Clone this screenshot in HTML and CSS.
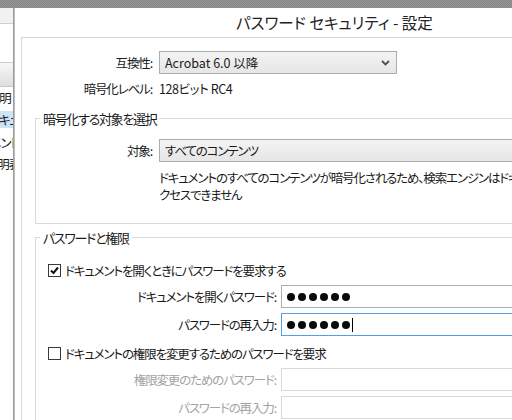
FILE: index.html
```html
<!DOCTYPE html>
<html lang="ja">
<head>
<meta charset="utf-8">
<link rel="stylesheet" href="styles.css">
</head>
<body>
<div class="desk">
  <div class="strip"></div>
  <div class="main">
    <div class="bgwin">
      <div class="bg-top"></div>
      <div class="bg-blank"></div>
      <div class="bg-head"></div>
      <div class="bg-list">
        <div class="bg-row r1">説明</div>
        <div class="bg-row r2">セキュリティ</div>
        <div class="bg-row r3">ドキュメント</div>
        <div class="bg-row r4">説明表示</div>
      </div>
    </div>
    <div class="dialog">
      <div class="titlebar">パスワード セキュリティ - 設定</div>
      <div class="panel">
        <div class="row row-compat">
          <div class="lbl lbl-top">互換性:</div>
          <div class="select select-compat">
            <span class="latin">Acrobat 6.0 以降</span>
            <svg class="chev" width="9" height="6" viewBox="0 0 9 6"><path d="M1 1 L4.5 4.5 L8 1" fill="none" stroke="#505050" stroke-width="1.8"/></svg>
          </div>
        </div>
        <div class="row row-level">
          <div class="lbl lbl-top">暗号化レベル:</div>
          <div class="val">128ビット RC4</div>
        </div>

        <fieldset class="group group1">
          <legend>暗号化する対象を選択</legend>
          <div class="row row-target">
            <div class="lbl lbl-in">対象:</div>
            <div class="select select-target"><span>すべてのコンテンツ</span></div>
          </div>
          <div class="desc">ドキュメントのすべてのコンテンツが暗号化されるため、検索エンジンはドキュメントのメタデータにア<br>クセスできません</div>
        </fieldset>

        <fieldset class="group group2">
          <legend>パスワードと権限</legend>
          <div class="check-row cr1">
            <span class="cb"><svg width="11" height="11" viewBox="0 0 11 11"><path d="M2 5.5 L4.5 8 L9 2.5" fill="none" stroke="#111" stroke-width="2"/></svg></span>
            <span>ドキュメントを開くときにパスワードを要求する</span>
          </div>
          <div class="row pw-row pr1">
            <div class="lbl lbl-pw">ドキュメントを開くパスワード:</div>
            <div class="input"><span class="dot"></span><span class="dot"></span><span class="dot"></span><span class="dot"></span><span class="dot"></span><span class="dot"></span></div>
          </div>
          <div class="row pw-row pr2">
            <div class="lbl lbl-pw">パスワードの再入力:</div>
            <div class="input focus"><span class="dot"></span><span class="dot"></span><span class="dot"></span><span class="dot"></span><span class="dot"></span><span class="dot"></span><span class="caret"></span></div>
          </div>
          <div class="check-row cr2">
            <span class="cb"></span>
            <span>ドキュメントの権限を変更するためのパスワードを要求</span>
          </div>
          <div class="row pw-row pr3">
            <div class="lbl lbl-pw dis">権限変更のためのパスワード:</div>
            <div class="input disabled"></div>
          </div>
          <div class="row pw-row pr4">
            <div class="lbl lbl-pw dis">パスワードの再入力:</div>
            <div class="input disabled"></div>
          </div>
        </fieldset>
      </div>
    </div>
  </div>
</div>
</body>
</html>
```
FILE: styles.css
```css
html, body {
  margin: 0;
  padding: 0;
  width: 512px;
  height: 420px;
  overflow: hidden;
  background: #ffffff;
}
.desk {
  width: 512px;
  height: 420px;
  overflow: hidden;
  font-family: "Noto Sans CJK JP", "Noto Sans", sans-serif;
  font-feature-settings: "palt";
  font-size: 12.5px;
  letter-spacing: -1.15px;
  color: #1a1a1a;
}
.strip {
  height: 8px;
  background-color: #8d8d8d;
  background-image: repeating-conic-gradient(#979797 0 25%, #848484 0 50%);
  background-size: 2px 2px;
}
.main {
  display: flex;
  height: 412px;
}
.bgwin {
  width: 13px;
  flex: none;
  border-right: 1px solid #9c9c9c;
  background: #fff;
  overflow: hidden;
}
.bg-top {
  height: 15px;
  background: #f1f1f1;
  border-bottom: 1px solid #d0d0d0;
}
.bg-blank {
  height: 38px;
  border-bottom: 1px solid #cfcfcf;
}
.bg-head {
  height: 23px;
  background: linear-gradient(#f7f7f7, #dedede);
  border-bottom: 1px solid #c8c8c8;
}
.bg-row {
  height: 17px;
  line-height: 17px;
  white-space: nowrap;
}
.r1 { margin-top: 2px; margin-left: -12px; }
.r2 { margin-top: 5px; margin-left: -12px; background: #cce4f7; }
.r3 { margin-top: 6px; margin-left: -38px; }
.r4 { margin-top: 4px; margin-left: -14px; }

.dialog {
  flex: none;
  width: 640px;
  border-left: 1px solid #bdbdbd;
  padding-left: 6px;
  background: #fff;
}
.titlebar {
  height: 29px;
  line-height: 29px;
  font-size: 15.5px;
  letter-spacing: 0;
  padding-left: 215px;
  color: #222;
  white-space: nowrap;
}
.panel {
  border-top: 1px solid #d6d6d6;
  border-left: 1px solid #d6d6d6;
  height: 400px;
}
.row {
  display: flex;
  align-items: center;
  white-space: nowrap;
}
.lbl {
  flex: none;
  text-align: right;
}
.lbl-top { width: 130px; margin-right: 7px; }
.lbl-in { width: 116px; margin-right: 7px; }
.lbl-pw { width: 240px; margin-right: 5px; }
.dis { color: #a3a3a3; }

.row-compat { margin-top: 13px; height: 23px; }
.row-level { margin-top: 6px; height: 17px; }
.latin { letter-spacing: 0; }
.val { letter-spacing: -0.4px; }

.select {
  box-sizing: border-box;
  height: 23px;
  border: 1px solid #acacac;
  background: linear-gradient(#f3f3f3, #e6e6e6);
  display: flex;
  align-items: center;
  padding-left: 5px;
  font-size: 12.5px;
}
.select-compat {
  width: 238px;
  justify-content: space-between;
  padding-right: 6px;
}
.select-target {
  width: 460px;
}
.chev { display: block; }

.group {
  margin: 13px 0 0 13px;
  padding: 0;
  border: 1px solid #d9d9d9;
  width: 560px;
  min-width: 0;
}
.group legend {
  margin-left: 4px;
  padding: 0 3px;
  line-height: 17px;
  font-size: 13px;
  letter-spacing: -1.3px;
}
.group1 { padding-bottom: 20px; }
.row-target { margin-top: 12px; height: 23px; }
.desc {
  margin-top: 7px;
  margin-left: 123px;
  line-height: 17px;
  white-space: nowrap;
}
.group2 { margin-top: 5px; padding-bottom: 20px; }

.check-row {
  display: flex;
  align-items: center;
  height: 17px;
  padding-left: 12px;
  white-space: nowrap;
}
.cr1 { margin-top: 16px; }
.cr2 { margin-top: 9px; }
.cb {
  box-sizing: border-box;
  width: 13px;
  height: 13px;
  border: 1px solid #3a3a3a;
  background: #fff;
  margin-right: 4px;
  display: flex;
  align-items: center;
  justify-content: center;
  flex: none;
}
.cb svg { display: block; }
.pw-row { height: 23px; }
.pr1 { margin-top: 6px; }
.pr2 { margin-top: 5px; }
.pr3 { margin-top: 6px; }
.pr4 { margin-top: 5px; }
.input {
  box-sizing: border-box;
  height: 23px;
  width: 320px;
  border: 1px solid #abadb3;
  background: #fff;
  display: flex;
  align-items: center;
  padding-left: 5px;
  gap: 3px;
}
.input.focus { border-color: #569de5; }
.input.disabled { border-color: #d9d9d9; }
.dot {
  width: 8px;
  height: 8px;
  border-radius: 50%;
  background: #0a0a0a;
  flex: none;
}
.caret {
  width: 1px;
  height: 14px;
  background: #000;
  margin-left: -1px;
}
```
